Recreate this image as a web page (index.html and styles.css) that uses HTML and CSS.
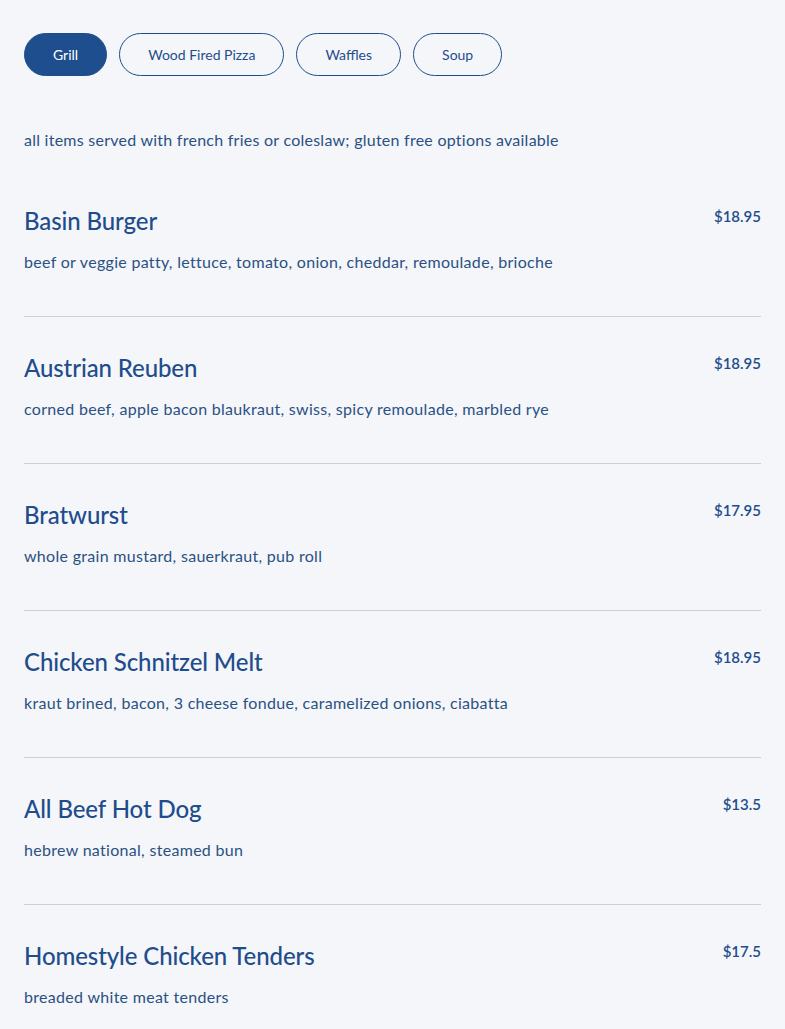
FILE: index.html
```html
<!DOCTYPE html>
<html lang="en">
<head>
  <meta charset="UTF-8">
  <meta name="viewport" content="width=device-width, initial-scale=1.0">
  <title>Grill Menu</title>
  <link rel="stylesheet" href="styles.css">
</head>
<body>
  <div class="menu">
    <nav class="tabs">
      <button class="tab active">Grill</button>
      <button class="tab">Wood Fired Pizza</button>
      <button class="tab">Waffles</button>
      <button class="tab">Soup</button>
    </nav>

    <p class="note">all items served with french fries or coleslaw; gluten free options available</p>

    <div class="item">
      <div class="item-text">
        <h2 class="item-name">Basin Burger</h2>
        <p class="item-desc">beef or veggie patty, lettuce, tomato, onion, cheddar, remoulade, brioche</p>
      </div>
      <span class="price">$18.95</span>
    </div>
    <div class="item">
      <div class="item-text">
        <h2 class="item-name">Austrian Reuben</h2>
        <p class="item-desc">corned beef, apple bacon blaukraut, swiss, spicy remoulade, marbled rye</p>
      </div>
      <span class="price">$18.95</span>
    </div>
    <div class="item">
      <div class="item-text">
        <h2 class="item-name">Bratwurst</h2>
        <p class="item-desc">whole grain mustard, sauerkraut, pub roll</p>
      </div>
      <span class="price">$17.95</span>
    </div>
    <div class="item">
      <div class="item-text">
        <h2 class="item-name">Chicken Schnitzel Melt</h2>
        <p class="item-desc">kraut brined, bacon, 3 cheese fondue, caramelized onions, ciabatta</p>
      </div>
      <span class="price">$18.95</span>
    </div>
    <div class="item">
      <div class="item-text">
        <h2 class="item-name">All Beef Hot Dog</h2>
        <p class="item-desc">hebrew national, steamed bun</p>
      </div>
      <span class="price">$13.5</span>
    </div>
    <div class="item">
      <div class="item-text">
        <h2 class="item-name">Homestyle Chicken Tenders</h2>
        <p class="item-desc">breaded white meat tenders</p>
      </div>
      <span class="price">$17.5</span>
    </div>
  </div>
</body>
</html>
```

FILE: styles.css
```css
body {
  margin: 0;
  background-color: #f4f6fa;
  font-family: Lato, "Liberation Sans", sans-serif;
  color: #2b5183;
}

.menu {
  padding: 33px 24px 0;
}

.tabs {
  display: flex;
  gap: 12px;
}

.tab {
  font-family: Lato, "Liberation Sans", sans-serif;
  font-size: 14px;
  line-height: 17px;
  padding: 12px 28px;
  color: #1f4d8c;
  background: transparent;
  border: 1px solid #1f4d8c;
  border-radius: 999px;
  cursor: pointer;
}

.tab.active {
  background-color: #1f4e8f;
  color: #ffffff;
}

.note {
  margin: 52px 0 18px;
  font-size: 16px;
  line-height: 24px;
  letter-spacing: 0.25px;
}

.item {
  display: flex;
  justify-content: space-between;
  align-items: flex-start;
  padding: 36px 0 42px;
  border-bottom: 1px solid #c9d0da;
}

.item-name {
  margin: 0;
  font-size: 24px;
  line-height: 30px;
  font-weight: 500;
  color: #1f4d8c;
  letter-spacing: -0.1px;
}

.item-desc {
  margin: 14px 0 0;
  font-size: 16px;
  line-height: 24px;
  letter-spacing: 0.3px;
}

.price {
  margin-top: 1px;
  font-size: 15px;
  line-height: 18px;
  font-weight: 600;
  color: #1f4d8c;
}
```
